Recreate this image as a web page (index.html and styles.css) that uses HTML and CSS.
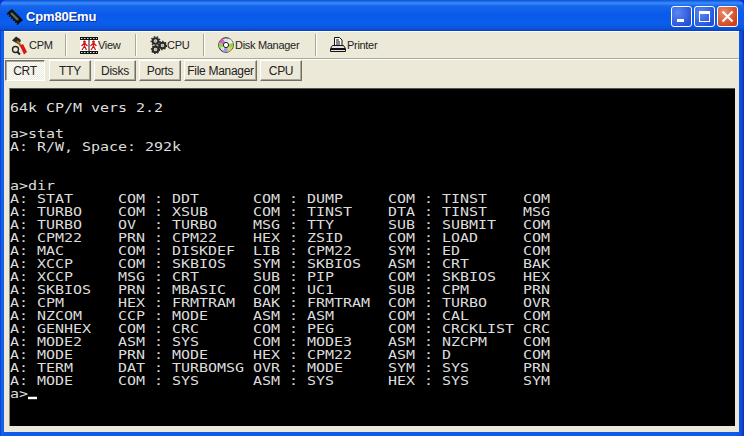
FILE: index.html
```html
<!DOCTYPE html>
<html lang="en">
<head>
<meta charset="utf-8">
<title>Cpm80Emu</title>
<link rel="stylesheet" href="styles.css">
</head>
<body>
<div class="window">
  <header class="titlebar">
    <svg class="app-icon" width="18" height="18" viewBox="0 0 18 18"><path d="M1 7l4-5M3 9l4-5M5 11l4-5M7 13l4-5M9 15l4-5M11 17l4-5" stroke="#111" stroke-width="1"/><path d="M1 5L6 1L17 12L12 16.500Z" fill="#111"/><path d="M5 5l7 7" stroke="#55705a" stroke-width="2.400"/><path d="M7 5l6 6" stroke="#23302a" stroke-width="1"/></svg>
    <span class="title">Cpm80Emu</span>
    <div class="controls">
      <div class="ctl ctl-blue"><span class="min-bar"></span></div>
      <div class="ctl ctl-blue"><span class="max-box"></span></div>
      <div class="ctl ctl-red"><svg width="13" height="13" viewBox="0 0 13 13"><path d="M1.500 1.500l10 10M11.500 1.500l-10 10" stroke="#fff" stroke-width="2.200"/></svg></div>
    </div>
  </header>
  <div class="frame">
    <nav class="toolbar">
      <div class="tool tool-cpm">
        <svg width="18" height="19" viewBox="0 0 18 19"><circle cx="4.500" cy="13.500" r="3" fill="none" stroke="#222" stroke-width="1.400"/><path d="M6.500 16l2.500 2.500" stroke="#222" stroke-width="2"/><path d="M1 4.500L5 .5l4 2.500 1 2-3 3z" fill="#2a2a2a"/><path d="M6 5l5 6" stroke="#a06a1c" stroke-width="2.400"/><path d="M9 10l3-2 1 2 3 6-3 2.500z" fill="#d81414"/></svg>
        <span>CPM</span>
      </div>
      <div class="tool tool-view">
        <svg width="18" height="17" viewBox="0 0 18 17"><rect width="18" height="17" fill="#111"/><rect y="3" width="18" height="11" fill="#fff"/><path d="M1 1.500h16M1 15.500h16" stroke="#d8d8d8" stroke-dasharray="1.500 1.500"/><path d="M9 3v11" stroke="#111"/><g fill="#d81818" stroke="#d81818"><circle cx="4.500" cy="4.800" r="1"/><circle cx="13.500" cy="4.800" r="1"/><path d="M4.500 6L1.500 9M4.500 6l3 3M4.500 6v3M4.500 9l-2.500 4M4.500 9l2 4M13.500 6l-3 3M13.500 6l3 3M13.500 6v3M13.500 9l-2.500 4M13.500 9l2 4" fill="none" stroke-width="1.300"/></g></svg>
        <span>View</span>
      </div>
      <div class="tool tool-cpu">
        <svg width="17" height="18" viewBox="0 0 17 18"><g fill="none" stroke="#2a2a2a" stroke-width="2"><circle cx="5.500" cy="5" r="2.800"/><circle cx="12.500" cy="9.500" r="2.800"/><circle cx="5.500" cy="13.500" r="2.800"/></g><g stroke="#2a2a2a" stroke-width="1.400" stroke-dasharray="1.500 1.500" fill="none"><circle cx="5.500" cy="5" r="4.300"/><circle cx="12.500" cy="9.500" r="4"/><circle cx="5.500" cy="13.500" r="4"/></g><g fill="#aaa"><circle cx="5.500" cy="5" r="1.200"/><circle cx="12.500" cy="9.500" r="1.200"/><circle cx="5.500" cy="13.500" r="1.200"/></g></svg>
        <span>CPU</span>
      </div>
      <div class="tool tool-disk">
        <svg width="16" height="16" viewBox="0 0 16 16"><circle cx="8" cy="8" r="7.300" fill="#dcdce4" stroke="#222"/><path d="M8 8L1 6A7 7 0 0 1 5 1.500Z" fill="#d860c8"/><path d="M8 8L1 6A7 7 0 0 0 1.500 11Z" fill="#8cd83c"/><path d="M8 8L15 6A7 7 0 0 0 11 1.500Z" fill="#e8e8f0"/><path d="M8 8L15 6A7 7 0 0 1 14.500 11Z" fill="#8cd83c"/><path d="M8 8L14.500 11A7 7 0 0 1 10 15Z" fill="#d8d060"/><path d="M8 8L5 14.500A7 7 0 0 0 10 15Z" fill="#9898e8"/><circle cx="8" cy="8" r="2.600" fill="#fff" stroke="#222"/></svg>
        <span>Disk Manager</span>
      </div>
      <div class="tool tool-printer">
        <svg width="16" height="16" viewBox="0 0 16 16"><path d="M4.500 .5h5l2.500 2.500v6h-7.500z" fill="#fff" stroke="#111"/><path d="M6 3h3M6 5h4M6 7h4" stroke="#111"/><path d="M2.500 8.500h11l2 3v3H.5v-3z" fill="#e4e4e4" stroke="#111"/><path d="M1 12h14" stroke="#111" stroke-width="2"/></svg>
        <span>Printer</span>
      </div>
    </nav>
    <div class="tabs">
      <div class="tab active t-crt">CRT</div>
      <div class="tab t-tty">TTY</div>
      <div class="tab t-disks">Disks</div>
      <div class="tab t-ports">Ports</div>
      <div class="tab t-fm">File Manager</div>
      <div class="tab t-cpu">CPU</div>
    </div>
    <div class="crt"><pre class="crt-text">

64k CP/M vers 2.2

a&gt;stat
A: R/W, Space: 292k


a&gt;dir
A: STAT     COM : DDT      COM : DUMP     COM : TINST    COM
A: TURBO    COM : XSUB     COM : TINST    DTA : TINST    MSG
A: TURBO    OV  : TURBO    MSG : TTY      SUB : SUBMIT   COM
A: CPM22    PRN : CPM22    HEX : ZSID     COM : LOAD     COM
A: MAC      COM : DISKDEF  LIB : CPM22    SYM : ED       COM
A: XCCP     COM : SKBIOS   SYM : SKBIOS   ASM : CRT      BAK
A: XCCP     MSG : CRT      SUB : PIP      COM : SKBIOS   HEX
A: SKBIOS   PRN : MBASIC   COM : UC1      SUB : CPM      PRN
A: CPM      HEX : FRMTRAM  BAK : FRMTRAM  COM : TURBO    OVR
A: NZCOM    CCP : MODE     ASM : ASM      COM : CAL      COM
A: GENHEX   COM : CRC      COM : PEG      COM : CRCKLIST CRC
A: MODE2    ASM : SYS      COM : MODE3    ASM : NZCPM    COM
A: MODE     PRN : MODE     HEX : CPM22    ASM : D        COM
A: TERM     DAT : TURBOMSG OVR : MODE     SYM : SYS      PRN
A: MODE     COM : SYS      ASM : SYS      HEX : SYS      SYM
a&gt;<span class="cursor"></span></pre></div>
  </div>
</div>
</body>
</html>
```
FILE: styles.css
```css
* { box-sizing: border-box; }
html, body { margin: 0; padding: 0; }
body { width: 744px; height: 436px; overflow: hidden; background: #0831d9; }
.window { width: 744px; height: 436px; display: flex; flex-direction: column; background: linear-gradient(to right, #0a3fc8 0, #1a66ee 2px, #0f5ae8 4px, #0f5ae8 739px, #0a48d8 742px, #0830b0 744px); border-radius: 7px 7px 0 0; overflow: hidden; }
.titlebar {
  height: 31px; flex: none; display: flex; align-items: center; padding: 2px 6px 0 6px;
  background: linear-gradient(to bottom, #0a4fd8 0, #3b8cf8 3px, #1566ec 6px, #0a5aea 14px, #0a5eee 24px, #0b50d4 29px, #0a3db8 31px);
}
.app-icon { margin-right: 2px; }
.title { font: bold 13px "Liberation Sans", sans-serif; letter-spacing: -0.15px; color: #fff; text-shadow: 1px 1px 0 #0f2f90; flex: 1; }
.controls { display: flex; gap: 2px; }
.ctl { width: 21px; height: 21px; border: 1px solid #fff; border-radius: 3px; display: flex; align-items: center; justify-content: center; position: relative; }
.ctl-blue { background: radial-gradient(circle at 30% 30%, #5a88f0, #2550d8 80%); }
.ctl-red { background: radial-gradient(circle at 30% 30%, #ee8a68, #d0401c 80%); }
.min-bar { width: 7px; height: 3px; background: #fff; position: absolute; left: 5px; bottom: 4px; }
.max-box { width: 11px; height: 11px; border: 1px solid #fff; border-top-width: 3px; }
.frame { flex: 1; min-height: 0; display: flex; flex-direction: column; margin: 0 5px 4px 4px; background: #ece9d8; padding-bottom: 6px; }
.toolbar { height: 28px; flex: none; display: flex; align-items: center; border-top: 1px solid #fff; border-bottom: 1px solid #aca899; box-shadow: 0 1px 0 #fff; }
.tool { display: flex; align-items: center; height: 22px; font: 11px "Liberation Sans", sans-serif; letter-spacing: -0.3px; color: #222; border-right: 1px solid #aca899; box-shadow: 1px 0 0 #fff; }
.tool-cpm { width: 62px; padding-left: 7px; }
.tool-view { width: 70px; padding-left: 14px; }
.tool-cpu { width: 68px; padding-left: 14px; }
.tool-disk { width: 112px; padding-left: 14px; gap: 1px; }
.tool-printer { border: 0; box-shadow: none; padding-left: 14px; gap: 1px; }
.tabs { height: 29px; flex: none; display: flex; align-items: flex-start; padding: 1px 0 0 1px; gap: 3px; }
.tab { height: 21px; font: 12px "Liberation Sans", sans-serif; letter-spacing: -0.3px; color: #222; display: flex; align-items: center; justify-content: center; background: #ece9d8; border: 1px solid; border-color: #fff #716f64 #716f64 #fff; box-shadow: inset -1px -1px 0 #aca899; }
.tab.active { border-color: #716f64 #fff #fff #716f64; box-shadow: inset 1px 1px 0 #aca899; background: repeating-conic-gradient(#fff 0 25%, #ece9d8 0 50%) 0 0 / 2px 2px; }
.t-crt { width: 40px; }
.t-tty { width: 42px; margin-left: 1px; }
.t-disks { width: 42px; }
.t-ports { width: 42px; }
.t-fm { width: 73px; }
.t-cpu { width: 42px; }
.crt { flex: 1; min-height: 0; margin: 0 0 0 5px; width: 726px; background: #000; border-top: 1px solid #555; border-left: 1px solid #8a8778; overflow: hidden; }
.crt-text { margin: -1px 0 0; color: #dcdcdc; font: 15px/16px "DejaVu Sans Mono", monospace; letter-spacing: -0.03px; transform: scale(1, 0.8125); transform-origin: 0 0; }
.cursor { display: inline-block; width: 9px; height: 3px; background: #fff; vertical-align: -2px; }
```
